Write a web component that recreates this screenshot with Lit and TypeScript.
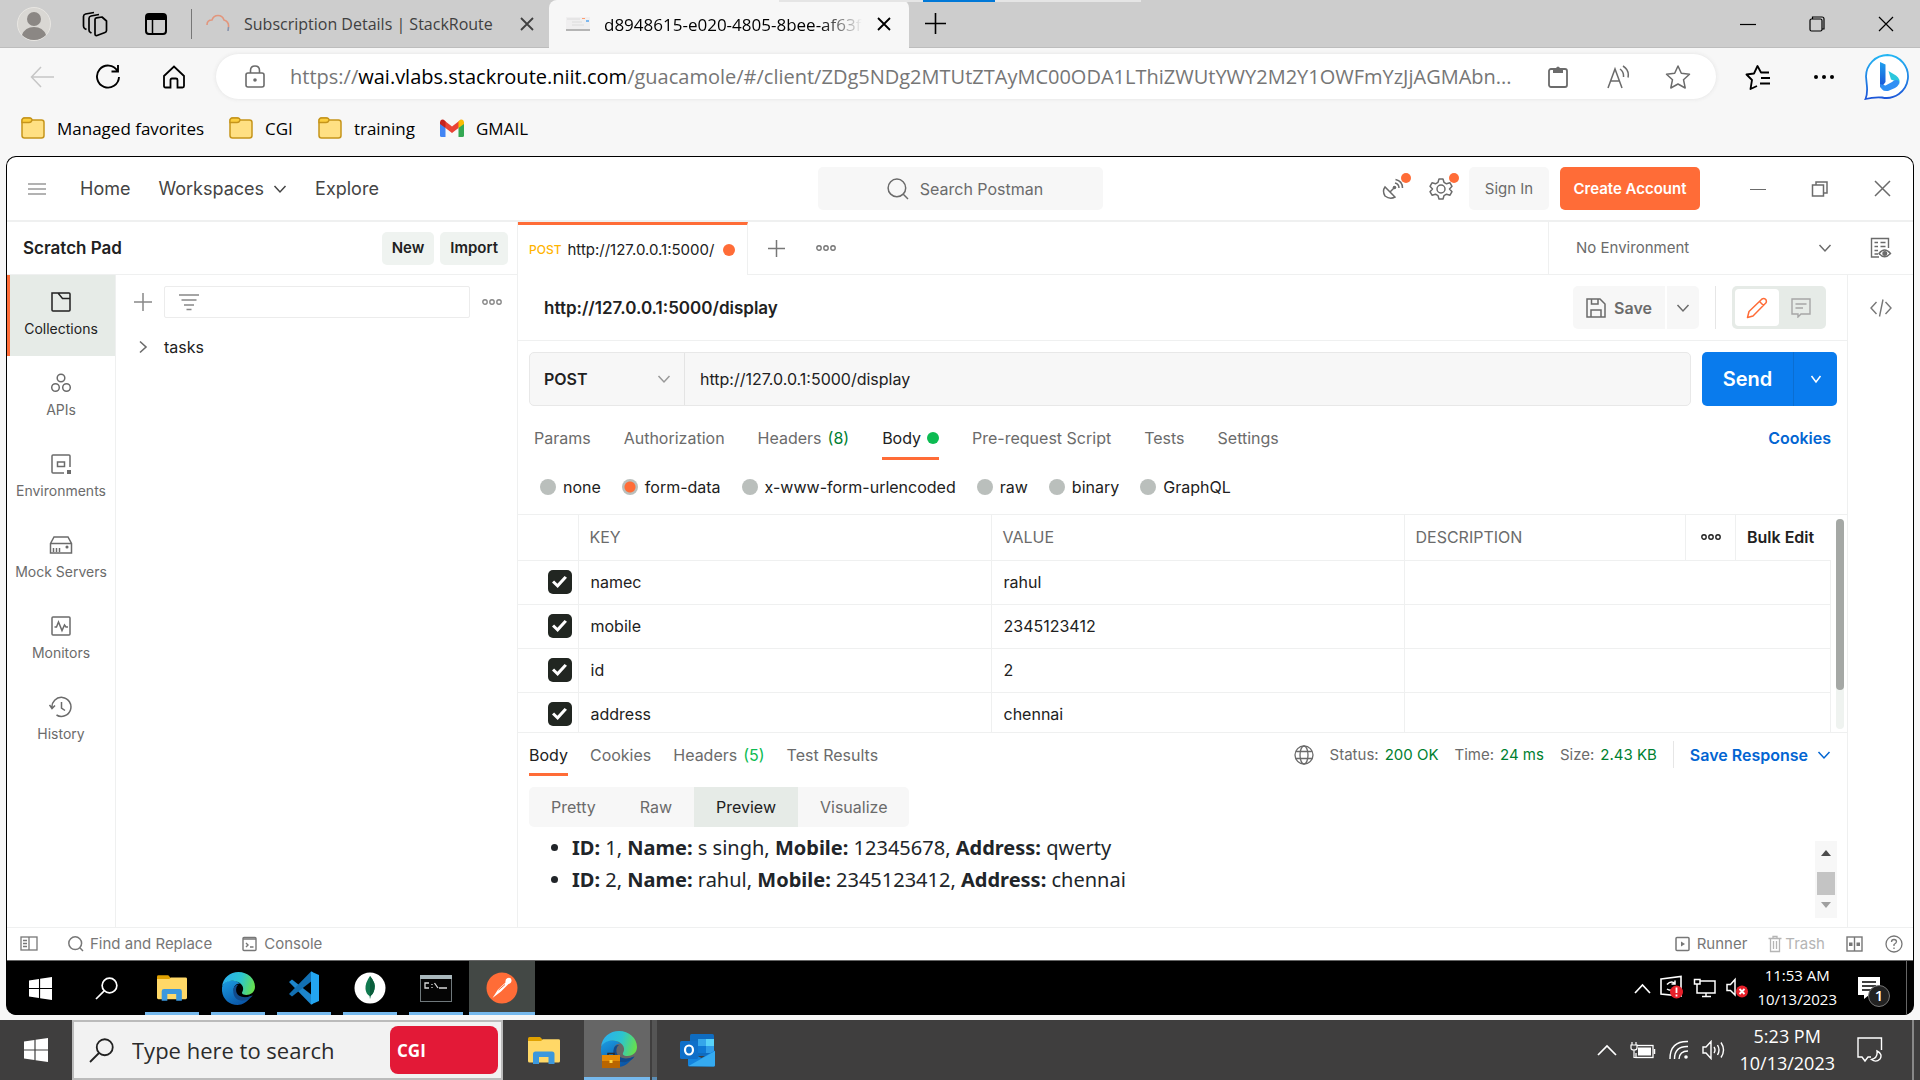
import { LitElement, html, svg, css, nothing } from "lit";
import { customElement } from "lit/decorators.js";
import { classMap } from "lit/directives/class-map.js";

/* ------------------------------------------------------------------ icons */

const line = (w: number, h: number, body: unknown, width = 1.5, cls = "") => html`<svg
  class=${cls} width=${w} height=${h} viewBox="0 0 ${w} ${h}" fill="none" stroke="currentColor"
  stroke-width=${width} aria-hidden="true">${body}</svg>`;

const art = (w: number, h: number, box: string, body: unknown) => html`<svg
  width=${w} height=${h} viewBox=${box} aria-hidden="true">${body}</svg>`;

const chevron = (w = 14, width = 1.5) =>
  line(w, 10, svg`<path d="M1.5 2 L${w / 2} 8 L${w - 1.5} 2"/>`, width);

const cross = (s: number, width = 1.5) =>
  line(s, s, svg`<path d="M1 1 L${s - 1} ${s - 1} M${s - 1} 1 L1 ${s - 1}"/>`, width);

const plus = (s: number, width = 1.5) =>
  line(s, s, svg`<path d="M${s / 2} 0 V${s} M0 ${s / 2} H${s}"/>`, width);

const dots = () =>
  line(20, 8, svg`<circle cx="3" cy="4" r="2.2"/><circle cx="10" cy="4" r="2.2"/><circle cx="17" cy="4" r="2.2"/>`, 1.4);

const magnifier = (s: number, width = 1.5) =>
  line(s, s, svg`<circle cx=${s * 0.45} cy=${s * 0.45} r=${s * 0.4}/><path d="M${s * 0.74} ${s * 0.74} L${s - 1} ${s - 1}"/>`, width);

const magnifierLeft = (s: number, width: number) =>
  line(s, s, svg`<circle cx=${s * 0.63} cy=${s * 0.37} r=${s * 0.32}/><path d="M${s * 0.4} ${s * 0.6} L1 ${s - 1}"/>`, width);

const windowsLogo = (s: number) => art(s, s, "0 0 24 24", svg`
  <path fill="#fff" d="M0 3.6 L10.4 2 V11.4 H0Z M11.6 1.8 L24 0 V11.4 H11.6Z M0 12.6 H10.4 V22 L0 20.4Z M11.6 12.6 H24 V24 L11.6 22.2Z"/>`);

const favFolder = () => art(24, 24, "0 0 24 24", svg`
  <path fill="#ffe083" stroke="#c6951b" stroke-width="1.5" d="M1 5 Q1 2 3.5 2 H8.5 Q10 2 11 4 H20.5 Q23 4 23 6.5 V19.5 Q23 22 20.5 22 H3.5 Q1 22 1 19.5Z"/>
  <path fill="#fccf3f" stroke="#c6951b" stroke-width="1.3" d="M1 4.5 Q1 2 3.5 2 H8 Q11 2 11 4 Q10.500 6.500 8 6.500 H1Z"/>`);

const explorer = (w: number, h: number) => art(w, h, "0 0 32 27", svg`
  <path fill="#e0a100" d="M0 1.500 Q0 0 1.500 0 H12 L15 3 V5 H0Z"/>
  <path fill="#ffd867" d="M0 4 H13 L15 2.200 H30.500 Q32 2.200 32 3.500 V24 Q32 25.500 30.500 25.500 H1.500 Q0 25.500 0 24Z"/>
  <path fill="#3c98dd" d="M5 27 V17 Q5 14.500 7.500 14.500 H24 Q26.500 14.500 26.500 17 V27 H20.500 V20 H11 V27Z"/>`);

const edge = (s: number, id: string) => art(s, s, "0 0 36 36", svg`
  <defs>
    <linearGradient id="${id}a" x1="0" y1="0.300" x2="1" y2="0.500">
      <stop offset="0" stop-color="#2aaef0"/><stop offset="0.550" stop-color="#2cc4cf"/><stop offset="1" stop-color="#66e04d"/>
    </linearGradient>
    <linearGradient id="${id}b" x1="0" y1="0" x2="0.600" y2="1">
      <stop offset="0" stop-color="#1b9de2"/><stop offset="1" stop-color="#0a56a8"/>
    </linearGradient>
  </defs>
  <path fill="url(#${id}b)" d="M0 17 C2 8 14 7 20 13 C15 12 12 16 13 21 C14 27 22 31 32 26 C28 33 22 36 17 36 C7 36 -1 28 0 17Z"/>
  <path fill="#114a8b" d="M13 17 C10 26 17 36 30 29 C33 27 34 25 33 25.500 C26 29 17 28 15.500 21 C15 18 16 15 18 14 C16 13.500 14 14.500 13 17Z"/>
  <path fill="url(#${id}a)" d="M0 16 C1 6 9 0 18 0 C28 0 36 7 36 16 C36 22 31 25 26.500 25 C22 25 21 23 22.500 21 C25 16 20 10 12 9.500 C6 9.500 2 12 0 16Z"/>`);

const icons = {
  avatar: art(34, 34, "0 0 34 34", svg`
    <circle cx="17" cy="17" r="16.500" fill="#d9d7d3" stroke="#e8e6e2"/>
    <circle cx="17" cy="12" r="7" fill="#8b8784"/><path d="M5 28 Q8 20 17 20 Q26 20 29 28 Q24 33 17 33 Q10 33 5 28Z" fill="#8b8784"/>`),
  workspaces: line(26, 26, svg`
    <path stroke-linejoin="round" d="M13 8.500 Q13 7 14.500 6.800 L20 6 L24.500 10 V19.500 Q24.500 21 23 21.500 L15 24.500 Q13 25 13 23Z"/>
    <path d="M9.500 22 L8.500 21.500 Q7 21 7 19 V7.500 Q7 5.500 9 5 L17 3.500"/>
    <path d="M4.500 18.500 L3 17.800 Q1.500 17 1.500 15 V5.500 Q1.500 3.500 3.500 3 L12 1.500"/>`, 1.7),
  tabActions: html`<svg width="22" height="22" viewBox="0 0 22 22" aria-hidden="true">
    <rect x="1" y="1" width="20" height="20" rx="3" fill="none" stroke="#000" stroke-width="2"/>
    <path d="M1 2 H21 V7 H1Z"/><path d="M7.500 7 V20" stroke="#000" stroke-width="1.500"/></svg>`,
  cloud: line(24, 20, svg`<path d="M1 11 C1 7 4 6 6 6 C8 0 16 0 18 6 C21 7 23 9 22.500 13" stroke="#e2967d"/><path d="M22.500 13 L22 17" stroke="#8a95ad"/>`, 1.6),
  pagePreview: art(24, 14, "0 0 24 14", svg`
    <rect width="24" height="14" fill="#f0eff0"/><path stroke="#dcdcdc" stroke-width="1" d="M1 2 H14 M6 5 H16 M6 8 H18"/>
    <rect x="16" y="1" width="3" height="1" fill="#ff9d70"/><rect x="20" y="3" width="3" height="2" fill="#7db7ee"/><rect y="12" width="24" height="2" fill="#b5b5b5"/>`),
  minimise: line(16, 16, svg`<path d="M0 8.500 H16"/>`, 1.2),
  restore: line(16, 16, svg`<rect x="1" y="3" width="12" height="12" rx="1.500"/><path d="M3.500 3 V1 H13 Q15 1 15 3 V13 H13"/>`, 1.2),
  back: line(24, 22, svg`<path d="M24 11 H1.500 M11 1 L1.500 11 L11 21"/>`, 1.5),
  reload: line(26, 26, svg`<path d="M22.500 7 A11 11 0 1 0 24 13 M23 1 V7.500 H16.500"/>`, 1.9),
  home: line(24, 24, svg`<path d="M2 11 L12 1.500 L22 11 V21 Q22 22.500 20.500 22.500 H15.500 V15 Q15.500 13.500 14 13.500 H10 Q8.500 13.500 8.500 15 V22.500 H3.500 Q2 22.500 2 21Z"/>`, 1.8),
  lock: line(20, 24, svg`<rect x="1" y="8" width="18" height="14" rx="2"/><path d="M5.500 8 V5.500 Q5.500 1 10 1 Q14.500 1 14.500 5.500 V8"/><circle cx="10" cy="15" r="1" fill="currentColor"/>`, 1.6),
  clipboard: line(20, 22, svg`<rect x="1" y="3" width="18" height="18" rx="2"/><path d="M5 3 H8 Q8 0.500 10 0.500 Q12 0.500 12 3 H15 V7 H5Z" fill="currentColor" stroke="none"/>`, 1.8),
  readAloud: line(24, 24, svg`<path d="M2 23 L9 4 L16 23 M5 16 H13 M14 4 Q18 7 17.500 12 M17 1 Q23.500 5 22 12.500"/>`, 1.5),
  star: line(26, 26, svg`<path stroke-linejoin="round" d="M13 2 L16.300 9.300 L24.500 10.200 L18.500 15.700 L20.200 24 L13 20 L5.800 24 L7.500 15.700 L1.500 10.200 L9.700 9.300Z"/>`, 1.5),
  favourites: line(26, 26, svg`<path stroke-linejoin="round" d="M12 22 L5.500 25 L7 16 L1.500 10.500 L9 9.500 L12.500 2 L16 8.500 H24"/><path d="M16 14 H25 M15 19.500 H25"/>`, 1.8),
  more: html`<svg width="22" height="6" viewBox="0 0 22 6" aria-hidden="true"><circle cx="3" cy="3" r="2"/><circle cx="11" cy="3" r="2"/><circle cx="19" cy="3" r="2"/></svg>`,
  bing: art(46, 46, "0 0 46 46", svg`
    <defs><linearGradient id="bg" x1="0" y1="0" x2="0" y2="1"><stop offset="0" stop-color="#24b6f3"/><stop offset="1" stop-color="#1d55d8"/></linearGradient>
    <linearGradient id="bb" x1="0" y1="0" x2="0" y2="1"><stop offset="0" stop-color="#1fa0ee"/><stop offset="1" stop-color="#1a4fd6"/></linearGradient></defs>
    <path fill="#fff" stroke="url(#bg)" stroke-width="1.800" d="M23.500 1 A21.500 21.500 0 1 1 18 43.500 Q9 43 1.500 45 Q3.500 40 3 33 L2 22.500 A21.500 21.500 0 0 1 23.500 1Z"/>
    <path fill="url(#bb)" d="M16 8 L21.500 10.500 V28 L17 34 Q16 33 16 31Z"/>
    <path fill="#2bc7dd" d="M24.500 17 L32 21.500 Q37 25 35 31 Q34.500 28 31 27 L27 25.500Z"/>
    <path fill="#2f8ff4" d="M16 30 Q16.500 38 24 37 L31 34 Q36 31 35 27 Q31.500 24.500 28 28 L21.500 31.500Z"/>`),
  gmail: art(24, 18, "0 0 24 18", svg`
    <path fill="#4285f4" d="M0 3 L5.500 7 V18 H1.500 Q0 18 0 16.500Z"/><path fill="#34a853" d="M24 3 L18.500 7 V18 H22.500 Q24 18 24 16.500Z"/>
    <path fill="#ea4335" d="M3 0.500 L12 7.500 L21 0.500 L18.500 9 L12 14 L5.500 9Z"/><path fill="#c5221f" d="M0 3 Q0.500 -0.500 3.500 0.700 L5.500 2.300 V9 L0 5Z"/><path fill="#fbbc04" d="M24 3 Q23.500 -0.500 20.500 0.700 L18.500 2.300 V9 L24 5Z"/>`),
  menu: line(18, 14, svg`<path d="M0 2 H18 M0 7 H18 M0 12 H18"/>`, 1.6),
  satellite: line(24, 24, svg`<path d="M4 10 Q1 14 4 19 Q9 23 14 20 Z M9 15 L13 11"/><circle cx="13.500" cy="10.500" r="1.800" fill="currentColor" stroke="none"/><path d="M14 6 Q18 7 18 11 M14.500 2.500 Q21.500 4 21.500 11"/>`, 1.5),
  gear: line(24, 24, svg`<path stroke-linejoin="round" d="M10 2 H14 L15 5.300 L17.500 6.800 L21 5.800 L23 9.300 L20.500 12 L23 14.700 L21 18.200 L17.500 17.200 L15 18.700 L14 22 H10 L9 18.700 L6.500 17.200 L3 18.200 L1 14.700 L3.500 12 L1 9.300 L3 5.800 L6.500 6.800 L9 5.300Z"/><circle cx="12" cy="12" r="4"/>`, 1.5),
  restoreRemote: line(18, 18, svg`<rect x="1.500" y="5" width="11" height="11"/><path d="M5 5 V2 H16 V13 H12.500"/>`, 1.5),
  envEye: line(22, 22, svg`<path d="M9 20 H1.500 V1.500 H18.500 V11 M4.500 5.500 H8 M10.500 5.500 H15.500 M4.500 9.500 H8 M10.500 9.500 H15.500 M4.500 13.500 H8 M4.500 17 H8"/><path d="M9 16.500 Q14.500 9.500 20.500 16.500 Q14.500 23 9 16.500Z"/><circle cx="14.800" cy="16.500" r="1.800" fill="currentColor"/>`, 1.4),
  collection: line(22, 22, svg`<path d="M2 2 H8 L12.500 7.500 H20 V19 Q20 20 19 20 H3 Q2 20 2 19Z M8 2 H19 Q20 2 20 3 V8"/>`, 1.5),
  apis: line(22, 22, svg`<circle cx="11" cy="6" r="3.800"/><circle cx="5.500" cy="15.500" r="3.800"/><circle cx="16.500" cy="15.500" r="3.800"/>`, 1.5),
  environment: line(22, 22, svg`<path d="M20 14 V3 Q20 2 19 2 H3 Q2 2 2 3 V19 Q2 20 3 20 H14"/><rect x="7.500" y="9" width="7" height="4.500"/><rect x="17" y="17" width="4" height="4" fill="currentColor" stroke="none"/>`, 1.5),
  server: line(24, 22, svg`<path d="M1.500 9.500 L5 3 H19 L22.500 9.500 V19 H1.500Z M1.500 9.500 H22.500 M4.500 18 V14 M7.500 18 V14 M10.500 18 V14"/><circle cx="18" cy="13" r="0.800" fill="currentColor"/>`, 1.5),
  monitor: line(22, 22, svg`<rect x="2" y="2" width="18" height="18" rx="1"/><path d="M4.500 12 H6.500 L8.500 7 L12 15.500 L14.500 10 L16 12 H18"/>`, 1.5),
  history: line(24, 22, svg`<path d="M3 12 A9.500 9.500 0 1 1 7.500 19 M0.500 9 L3 12.500 L6 9.500 M12.500 6 V12 L16 14.500"/>`, 1.5),
  filter: line(20, 18, svg`<path d="M0 2 H20 M2.500 7 H17.500 M5 12 H15 M7.500 16.500 H12.500"/>`, 1.6),
  right: line(10, 14, svg`<path d="M2 1.500 L8 7 L2 12.500"/>`, 1.6),
  save: line(20, 20, svg`<path d="M1 1 H14 L19 6 V19 H1Z M5.500 1 V6 H12 V1 M5 19 V12 H15 V19"/>`, 1.5),
  pencil: line(22, 22, svg`<path stroke-linejoin="round" d="M1.500 20.500 L3 14.500 L16 2 Q18 0.800 19.800 2.500 Q21 4.500 19.800 6 L7 19Z M13.500 4.500 L17.500 8.500"/>`, 1.5),
  comment: line(20, 20, svg`<path d="M1 1 H19 V16 H10 L7 19 V16 H1Z M4.500 6 H15.500 M4.500 10 H12"/>`, 1.4),
  code: line(22, 18, svg`<path d="M6.500 3 L1 9 L6.500 15 M15.500 3 L21 9 L15.500 15 M13 0.500 L9.500 17.500"/>`, 1.4),
  globe: line(20, 20, svg`<circle cx="10" cy="10" r="9"/><ellipse cx="10" cy="10" rx="4" ry="9"/><path d="M2 6.500 H18 M2 13.500 H18"/>`, 1.3),
  panel: line(18, 16, svg`<rect x="1" y="1" width="16" height="13"/><path d="M9 1 V14 M3 4.500 H7 M3 7.500 H7 M3 10.500 H7"/>`, 1.3),
  console: line(16, 16, svg`<rect x="1" y="1.500" width="13" height="13" rx="1"/><path d="M1 3 H14 M4 7 L6 9 L4 11 M8 11 H11.500"/>`, 1.4),
  runner: line(16, 16, svg`<rect x="1" y="1.500" width="13" height="13" rx="1"/><path d="M6 5.500 L10 8 L6 10.500Z" fill="currentColor" stroke="none"/>`, 1.5),
  trash: line(14, 18, svg`<path d="M0.500 3.500 H13.500 M5 3.500 V1.500 H9 V3.500 M2.500 3.500 V16.500 H11.500 V3.500 M5.500 6 V14 M8.500 6 V14"/>`, 1.3),
  twoPane: line(18, 18, svg`<rect x="1" y="2" width="15" height="14"/><path d="M8.500 2 V16"/><rect x="3" y="7.500" width="3.500" height="3.500" fill="currentColor" stroke="none"/><rect x="10.500" y="7.500" width="3.500" height="3.500" fill="currentColor" stroke="none"/>`, 1.4),
  help: line(18, 18, svg`<circle cx="9" cy="9" r="8"/><path d="M6.500 7 Q6.500 4.500 9 4.500 Q11.500 4.500 11.500 6.800 Q11.500 8 9 9.500 V11 M9 12.500 V14"/>`, 1.3),
  vscode: art(34, 34, "0 0 34 34", svg`
    <path fill="#1d86cc" d="M2 11 L5 8.500 L26 25 V33 L24 33.500Z"/><path fill="#1270b3" d="M2 23 L5 25.500 L26 9 V1 L24 0.500Z"/>
    <path fill="#23a5f0" d="M24 0.500 L32 4 V30 L24 33.500 Z"/>`),
  mongo: art(32, 32, "0 0 32 32", svg`
    <circle cx="16" cy="16" r="15.500" fill="#fff"/><path fill="#10794f" d="M16 4 Q22 11 20.500 17 Q19.500 22 16.500 24 L16 27 L15.500 24 Q12 22 11.500 17 Q11 11 16 4Z"/><path fill="#0a5c3b" d="M16 4 Q22 11 20.500 17 Q19.500 22 16.500 24 L16 27Z"/>`),
  terminal: html`<svg width="32" height="27" viewBox="0 0 32 27" aria-hidden="true">
    <rect x="0.500" y="0.500" width="31" height="26" fill="#050505" stroke="#6f787b"/><rect width="32" height="4" fill="#a9b7bc"/>
    <path d="M9 8 H5 V13 H9 M12 9 V10 M12 12 V13 M14.500 8 L18 13 M19 13 H27" fill="none" stroke="#d8d8d8" stroke-width="1.300"/></svg>`,
  postman: art(32, 32, "0 0 32 32", svg`
    <circle cx="16" cy="16" r="15.500" fill="#ff6c37"/><path fill="#fff" d="M6.500 26 L12 17.500 L19.500 10.500 Q19 7 21.500 6 Q25 5 25.500 8 Q25.800 11.500 22.500 12 L15 19.500Z"/><path stroke="#ff6c37" stroke-width="1" d="M12.500 18 L19 12.500"/>`),
  caret: line(20, 12, svg`<path d="M1 11 L10 2 L19 11"/>`, 1.7),
  update: art(26, 26, "0 0 26 26", svg`
    <path fill="none" stroke="#fff" stroke-width="1.600" d="M2 4 L22 1.500 V21 L2 19Z"/><path fill="none" stroke="#fff" stroke-width="1.500" d="M8 9.500 Q12 5 16 8.500 M16 5.500 V9 H12.500 M16 13 Q12 17 8 14"/>
    <circle cx="17.500" cy="17" r="6.500" fill="#e8202a"/><path stroke="#fff" stroke-width="1.800" d="M17.500 12.500 V18 M17.500 19.500 V21.500"/>`),
  network: line(24, 20, svg`<path d="M7 3 H22 V15 H4 V9 M1.500 1.500 H7 V6 H1.500Z M4 6 V9 M13 15 V18.500 M9 18.500 H18"/>`, 1.5),
  muted: art(24, 22, "0 0 24 22", svg`
    <path fill="none" stroke="#fff" stroke-width="1.500" d="M2 7.500 H5.500 L10 2.500 V18 L5.500 13.500 H2Z"/>
    <circle cx="17" cy="14.500" r="6" fill="#e8202a"/><path stroke="#fff" stroke-width="1.800" d="M14.500 12 L19.500 17 M19.500 12 L14.500 17"/>`),
  message: art(24, 24, "0 0 24 24", svg`
    <path fill="#fff" d="M1 1 H23 V19 H12 L7 23 V19 H1Z"/><path stroke="#000" stroke-width="1.600" d="M5 6 H19 M5 10 H19 M5 14 H14"/>`),
  briefcase: art(18, 16, "0 0 18 16", svg`
    <path fill="none" stroke="#2b2b2b" stroke-width="1.500" d="M6 4 V1.500 H12 V4"/><rect y="3" width="18" height="13" fill="#e48a05"/><rect y="9" width="18" height="7" fill="#b96500"/><rect x="7.500" y="8" width="3" height="3" fill="#ffd53d"/>`),
  outlook: html`<svg width="35" height="33" viewBox="0 0 35 33" aria-hidden="true">
    <rect x="10" y="0" width="24" height="22" rx="1.500" fill="#0f6cc0"/><rect x="18" y="5" width="8" height="7" fill="#35a6ea"/><rect x="26" y="5" width="8" height="7" fill="#58d2f8"/>
    <rect x="18" y="12" width="8" height="7" fill="#0f78d4"/><rect x="26" y="12" width="8" height="7" fill="#2f9ce8"/>
    <path fill="#1383dd" d="M8 17 L21.500 24 L35 16.500 V31 Q35 32.500 33.500 32.500 H9.500 Q8 32.500 8 31Z"/><path fill="#35aaf0" d="M35 17 L8.500 32 L34 32.500 Q35 32 35 31Z"/>
    <rect x="0" y="7" width="18" height="18" rx="1.500" fill="#0f6fc9"/><ellipse cx="9" cy="16" rx="4" ry="4.500" fill="none" stroke="#fff" stroke-width="2.200"/></svg>`,
  battery: html`<svg width="26" height="18" viewBox="0 0 26 18" aria-hidden="true">
    <rect x="6" y="4.500" width="17" height="12" fill="none" stroke="#fff" stroke-width="1.300"/><rect x="8" y="6.500" width="13" height="8" fill="#fff"/><path d="M24.500 8 V13" stroke="#fff" stroke-width="1.500"/>
    <rect x="0" y="1" width="7" height="11" fill="#3f3e3e"/><path d="M2 1 V4 M6 1 V4 M1 4 H7 V7 Q7 9 4 9 Q1 9 1 7Z M4 9 V16.500 H7" fill="none" stroke="#fff" stroke-width="1.200"/></svg>`,
  wifi: line(20, 20, svg`<path d="M1 19 Q1 1 19 1.500 M5.500 19 Q5.500 6 19 6.500 M10 19 Q10.500 11 19 11"/><circle cx="17" cy="17" r="1.800" fill="currentColor" stroke="none"/>`, 1.4),
  volume: line(24, 20, svg`<path d="M1 7 H4 L9 1.500 V18.500 L4 13 H1Z M12 7 Q14 10 12 13 M15.500 5 Q18.500 10 15.500 15 M19 2.500 Q24 10 19 17.500"/>`, 1.4),
  quiet: line(26, 26, svg`<path d="M14 20 H11 L8 24 L5 20 H1 V1 H24.500 V13"/><path d="M20 14 Q26 17 23 22 Q19 26 14.500 22.500 Q21 21 20 14Z"/>`, 1.4),
};

/* ----------------------------------------------------------- shared rules */

const base = css`
  *, *::before, *::after { box-sizing: border-box; }
  svg { display: block; flex: none; }
  button, select, input { font: inherit; color: inherit; margin: 0; border: 0; background: none; padding: 0; }
  button { display: flex; align-items: center; justify-content: center; white-space: nowrap; cursor: pointer; flex: none; }
  a { color: inherit; text-decoration: none; }
  select { appearance: none; }
  input { min-width: 0; }
`;

/* --------------------------------------------------------- browser chrome */

@customElement("browser-chrome")
export class BrowserChrome extends LitElement {
  static styles = [base, css`
    :host { display: block; background: #f7f7f7; color: #000; font-size: 17px; }
    .strip { display: flex; height: 48px; background: #cdcdcd; padding-left: 3px; position: relative; border-bottom: 1px solid #bdbdbd; }
    .cell { width: 61px; height: 48px; }
    .tab { display: flex; align-items: center; width: 360px; padding: 0 17px; gap: 14px; min-width: 0; }
    .tab.idle { color: #404040; padding: 0 14px 0 5px; width: 363px; font-size: 16px; }
    .tab.idle::before { content: ""; width: 1px; height: 30px; background: #777; }
    .tab.open { background: #f7f7f7; border-radius: 8px 8px 0 0; height: 48px; }
    .name { flex: 1; white-space: nowrap; }
    .tab.open .name { overflow: hidden; mask-image: linear-gradient(to right, #000 84%, transparent); }
    .close { width: 16px; height: 24px; }
    .add { width: 52px; }
    .share { position: absolute; left: 779px; top: 0; width: 362px; height: 2px; background: linear-gradient(to right, #e5e5e5 144px, #0078d7 144px, #0078d7 216px, #e5e5e5 216px); }
    .window { margin-left: auto; display: flex; }
    .window button { width: 69px; height: 48px; }
    .tools { display: flex; align-items: center; height: 57px; padding: 0 3px 0 9px; }
    .tool { width: 66px; height: 44px; }
    .tool.off { color: #c6c6c6; }
    .tool.small { width: 60px; }
    .address { flex: 1; min-width: 0; display: flex; align-items: center; height: 45px; margin: 0 9px; padding: 0 8px 0 29px;
      border-radius: 23px; background: #fff; box-shadow: 0 0 4px #e2e2e2; color: #6b6b6b; }
    .url { flex: 1; min-width: 0; margin: 0 8px 0 25px; overflow: hidden; white-space: nowrap; font-size: 20px; color: #767676; outline: 0; }
    .host { color: #000; }
    .favs { display: flex; align-items: center; gap: 25px; height: 48px; padding: 0 21px 2px; }
    .fav { display: flex; align-items: center; gap: 12px; }
  `];

  render() {
    const favs: [string, unknown][] = [
      ["Managed favorites", favFolder()], ["CGI", favFolder()], ["training", favFolder()], ["GMAIL", icons.gmail],
    ];
    return html`
      <div class="strip">
        <button class="cell" aria-label="Profile">${icons.avatar}</button>
        <button class="cell" aria-label="Workspaces">${icons.workspaces}</button>
        <button class="cell" aria-label="Tab actions">${icons.tabActions}</button>
        <div class="tab idle">
          ${icons.cloud}<span class="name">Subscription Details | StackRoute</span>
          <button class="close" aria-label="Close tab">${cross(14, 1.8)}</button>
        </div>
        <div class="tab open">
          ${icons.pagePreview}<span class="name">d8948615-e020-4805-8bee-af63f</span>
          <button class="close" aria-label="Close tab">${cross(14, 1.8)}</button>
        </div>
        <button class="add" aria-label="New tab">${plus(21, 1.6)}</button>
        <div class="share"></div>
        <div class="window">
          <button aria-label="Minimise">${icons.minimise}</button>
          <button aria-label="Restore">${icons.restore}</button>
          <button aria-label="Close">${cross(16, 1.2)}</button>
        </div>
      </div>
      <div class="tools">
        <button class="tool off" aria-label="Back">${icons.back}</button>
        <button class="tool" aria-label="Reload">${icons.reload}</button>
        <button class="tool" aria-label="Home">${icons.home}</button>
        <div class="address">
          ${icons.lock}
          <div class="url" role="textbox" aria-label="Address" contenteditable="true">https://<span class="host">wai.vlabs.stackroute.niit.com</span>/guacamole/#/client/ZDg5NDg2MTUtZTAyMC00ODA1LThiZWUtYWY2M2Y1OWFmYzJjAGMAbn...</div>
          <button class="tool small" aria-label="Clipboard">${icons.clipboard}</button>
          <button class="tool small" aria-label="Read aloud">${icons.readAloud}</button>
          <button class="tool small" aria-label="Add favorite">${icons.star}</button>
        </div>
        <button class="tool" aria-label="Favorites">${icons.favourites}</button>
        <button class="tool" aria-label="More">${icons.more}</button>
        <button class="tool small" aria-label="Bing">${icons.bing}</button>
      </div>
      <nav class="favs">
        ${favs.map(([name, icon]) => html`<a class="fav" href="#">${icon}<span>${name}</span></a>`)}
      </nav>`;
  }
}

/* --------------------------------------------------------- postman window */

const rail: [string, unknown][] = [
  ["Collections", icons.collection], ["APIs", icons.apis], ["Environments", icons.environment],
  ["Mock Servers", icons.server], ["Monitors", icons.monitor], ["History", icons.history],
];
const rows = [["namec", "rahul"], ["mobile", "2345123412"], ["id", "2"], ["address", "chennai"]];
const results = [
  { id: "1", name: "s singh", mobile: "12345678", address: "qwerty" },
  { id: "2", name: "rahul", mobile: "2345123412", address: "chennai" },
];

@customElement("postman-window")
export class PostmanWindow extends LitElement {
  static styles = [base, css`
    :host { --line: #eff0f0; --muted: #6b6b6b; --ink: #212121; --orange: #ff6c37;
      display: flex; flex-direction: column; flex: 1; min-height: 0; background: #fff; color: var(--ink);
      font-family: Inter, "Liberation Sans", sans-serif; font-size: 16px; line-height: 20px; }
    .strong { font-weight: 600; }
    .muted { color: var(--muted); }

    .top { display: grid; grid-template-columns: 1fr 285px 1fr; align-items: center; height: 65px; border-bottom: 2px solid var(--line); color: #444; }
    .menu { display: flex; align-items: center; font-size: 18px; gap: 28px; padding-left: 15px; }
    .menu .burger { width: 30px; color: #999; }
    .menu button { gap: 9px; }
    .search { height: 43px; border-radius: 5px; background: #f7f7f7; color: var(--muted); gap: 11px; padding-left: 10px; }
    .actions { display: flex; justify-content: flex-end; align-items: center; color: var(--muted); font-size: 15px; }
    .badge { width: 48px; height: 43px; position: relative; }
    .badge::after { content: ""; position: absolute; right: 6px; top: 6px; width: 10px; height: 10px; border-radius: 50%; background: var(--orange); }
    .sign { height: 43px; width: 80px; border-radius: 5px; background: #f7f7f7; margin: 0 11px 0 4px; }
    .create { height: 43px; width: 140px; border-radius: 5px; background: var(--orange); color: #fff; margin-right: 27px; font-weight: 600; }
    .win { width: 62px; height: 43px; }

    .bar { display: flex; height: 53px; }
    .pad { width: 511px; display: flex; align-items: center; gap: 6px; padding: 0 9px 0 16px; border-right: 1px solid var(--line); border-bottom: 1px solid var(--line); }
    .pad h1 { margin: 0 auto 0 0; font-size: 17px; font-weight: 600; }
    .soft { height: 33px; padding: 0 10px; border-radius: 5px; background: #eff3f0; font-size: 15px; font-weight: 600; }
    .rtab { width: 230px; display: flex; align-items: center; gap: 6px; padding: 0 12px 0 11px; border-top: 3px solid var(--orange); border-right: 1px solid var(--line); font-size: 15px; }
    .verb { color: #ffb400; font-size: 12px; font-weight: 500; }
    .clip { flex: 1; overflow: hidden; white-space: nowrap; }
    .dot { width: 12px; height: 12px; border-radius: 50%; background: var(--orange); flex: none; }
    .spare { flex: 1; display: flex; align-items: center; padding-left: 4px; border-bottom: 1px solid var(--line); color: #777; }
    .spare button { width: 49px; height: 48px; }
    .env { width: 365px; display: flex; align-items: center; border-left: 1px solid var(--line); border-bottom: 1px solid var(--line); padding: 0 21px 0 27px; color: var(--muted); font-size: 15px; }
    .env select { flex: 1; }
    .env .eye { margin-left: 38px; }

    .work { display: flex; flex: 1; min-height: 0; }
    .rail { width: 109px; border-right: 1px solid var(--line); }
    .rail button { width: 100%; height: 81px; flex-direction: column; gap: 6px; color: #6b6b6b; font-size: 14px; border-left: 3px solid transparent; padding: 0 3px 2px 0; }
    .rail .on { background: #e6ebe7; color: var(--ink); border-color: var(--orange); }
    .side { width: 402px; border-right: 1px solid var(--line); }
    .find { display: flex; align-items: center; padding: 11px 16px 0 18px; gap: 12px; color: #888; }
    .find label { flex: 1; display: flex; align-items: center; height: 32px; padding: 0 14px; gap: 8px; border: 1px solid #ececec; border-radius: 2px; }
    .find input { flex: 1; }
    .tree { display: flex; align-items: center; gap: 16px; padding: 19px 22px; }

    .main { flex: 1; min-width: 0; display: flex; flex-direction: column; }
    .title { display: flex; align-items: center; height: 66px; padding: 0 21px 0 26px; border-bottom: 1px solid var(--line); }
    .title h2 { margin: 0 auto 0 0; font-size: 17px; font-weight: 600; }
    .split { display: flex; gap: 2px; color: var(--muted); font-weight: 600; }
    .split button { height: 43px; background: #f7f7f7; width: 32px; border-radius: 0 5px 5px 0; }
    .split .save { width: 92px; gap: 8px; border-radius: 5px 0 0 5px; }
    .tick { width: 1px; height: 43px; background: #e6e6e6; margin: 0 16px; }
    .mode { display: flex; padding: 3px; height: 43px; border-radius: 5px; background: #e6ebe7; color: #a6a6a6; }
    .mode button { width: 44px; border-radius: 4px; }
    .mode .on { background: #fff; color: var(--orange); }

    .request { display: flex; gap: 11px; padding: 11px 10px 0 11px; }
    .field { flex: 1; display: flex; align-items: center; height: 54px; border: 1px solid #e8e8e8; border-radius: 5px; background: #f7f7f7; }
    .method { display: flex; align-items: center; width: 155px; height: 52px; padding: 0 13px 0 14px; border-right: 1px solid #e4e4e4; color: #999; }
    .method select { flex: 1; font-weight: 600; color: var(--ink); }
    .field input { flex: 1; height: 52px; padding: 0 15px; }
    .send { display: flex; color: #fff; }
    .send button { height: 54px; background: #097bed; width: 44px; border-left: 1px solid #0a6ed2; border-radius: 0 5px 5px 0; }
    .send .go { width: 91px; font-size: 20px; font-weight: 600; border: 0; border-radius: 5px 0 0 5px; }

    .tabs { display: flex; gap: 33px; height: 44px; margin-top: 10px; padding: 0 16px; color: var(--muted); }
    .tabs a { display: flex; align-items: center; gap: 6px; border-top: 3px solid transparent; border-bottom: 3px solid transparent; white-space: nowrap; }
    .tabs .on { color: var(--ink); border-bottom-color: var(--orange); }
    .tabs .link { margin-left: auto; }
    .link { color: #0265d2; font-weight: 600; }
    .green { color: #007f31; }
    .lime { color: #0cbb52; }
    .blip { width: 12px; height: 12px; border-radius: 50%; background: #0cbb52; }

    .kinds { display: flex; align-items: center; gap: 21px; height: 54px; padding: 0 22px; }
    .kinds label { display: flex; align-items: center; gap: 7px; white-space: nowrap; }
    .kinds input { appearance: none; width: 16px; height: 16px; border-radius: 50%; background: #babfbc; }
    .kinds input:checked { background: radial-gradient(circle, var(--orange) 5px, #babfbc 6px); }

    .sheet { display: flex; height: 218px; overflow: hidden; border-top: 1px solid var(--line); padding-right: 3px; }
    table { flex: 1; align-self: flex-start; border-collapse: collapse; table-layout: fixed; width: 100%; }
    th, td { height: 44px; padding: 0 12px; text-align: left; border: solid var(--line); border-width: 0 1px 1px 0; font-weight: 400; }
    th { height: 45px; padding: 0 11px; color: var(--muted); }
    th:first-child { width: 60px; }
    .wide { width: 413px; }
    .slim { width: 50px; }
    .bulk { width: 95px; color: var(--ink); }
    .bulk { border-right: 0; }
    .slim button { width: 100%; color: var(--ink); }
    td:first-child { padding: 0 6px 0 0; }
    td input { appearance: none; display: flex; align-items: center; justify-content: center; width: 24px; height: 24px; margin-left: auto; border-radius: 5px; background: #212621; }
    td input:checked::after { content: ""; width: 15px; height: 12px; background: #fff; clip-path: polygon(0 54%, 14% 38%, 36% 64%, 84% 0, 100% 14%, 38% 100%); }
    .track { width: 8px; margin: 4px 0 3px 5px; border-radius: 4px; background: #eff3f0; }
    .thumb { width: 8px; height: 171px; border-radius: 4px; background: #a5a8a5; }

    .reply { display: flex; border-top: 1px solid var(--line); height: 44px; padding: 0 16px 0 11px; align-items: center; }
    .reply .tabs { margin: 0 auto 0 0; padding: 0; gap: 22px; height: 43px; }
    .facts { display: flex; align-items: center; gap: 16px; font-size: 15px; color: var(--muted); white-space: nowrap; }
    .facts b { font-weight: 400; color: #007f31; margin-left: 6px; }
    .reply .tick { height: 27px; margin: 0 16px; }
    .reply .link { gap: 9px; }
    .views { display: flex; align-self: flex-start; margin: 11px 0 0 11px; height: 40px; border-radius: 5px; overflow: hidden; background: #f7f7f7; color: var(--muted); }
    .views button { padding: 0 22px; }
    .views .on { background: #e6ebe7; color: var(--ink); }
    .preview { flex: 1; display: flex; min-height: 0; padding-right: 10px; color: #212529; font-family: "Noto Sans", "Open Sans", sans-serif; font-size: 20px; line-height: 32px; }
    .preview ul { flex: 1; margin: 0; padding: 5px 0 0 54px; }
    .scroll { display: flex; flex-direction: column; align-items: center; justify-content: space-between; width: 22px; margin: 14px 0 9px; padding: 9px 0 10px; background: #f7f7f7; }
    .up, .down { width: 10px; height: 6px; background: #4c4c4c; clip-path: polygon(50% 0, 100% 100%, 0 100%); }
    .down { background: #a0a0a0; clip-path: polygon(0 0, 100% 0, 50% 100%); }
    .grip { width: 18px; height: 23px; background: #c4c4c4; margin-top: 8px; }
    .aside { width: 66px; border-left: 1px solid var(--line); color: #777; }
    .aside button { width: 100%; height: 66px; }

    .status { display: flex; align-items: center; justify-content: space-between; height: 33px; border-top: 1px solid var(--line); padding: 0 10px 0 13px; color: #777; font-size: 15px; }
    .group { display: flex; align-items: center; gap: 30px; }
    .group.end { gap: 21px; }
    .status button { gap: 6px; }
    .status .trash { color: #b5b5b5; gap: 3px; }
  `];

  render() {
    return html`
      <header class="top">
        <nav class="menu">
          <button class="burger" aria-label="Menu">${icons.menu}</button>
          <button>Home</button><button>Workspaces ${chevron()}</button><button>Explore</button>
        </nav>
        <button class="search">${magnifier(22)} Search Postman</button>
        <div class="actions">
          <button class="badge" aria-label="Connection">${icons.satellite}</button>
          <button class="badge" aria-label="Settings">${icons.gear}</button>
          <button class="sign">Sign In</button>
          <button class="create">Create Account</button>
          <button class="win" aria-label="Minimise">${icons.minimise}</button>
          <button class="win" aria-label="Restore">${icons.restoreRemote}</button>
          <button class="win" aria-label="Close">${cross(17, 1.5)}</button>
        </div>
      </header>

      <div class="bar">
        <div class="pad"><h1>Scratch Pad</h1><button class="soft">New</button><button class="soft">Import</button></div>
        <div class="rtab"><span class="verb">POST</span><span class="clip">http://127.0.0.1:5000/</span><span class="dot"></span></div>
        <div class="spare"><button aria-label="New request">${plus(17)}</button><button aria-label="Tab options">${dots()}</button></div>
        <div class="env">
          <select aria-label="Environment"><option>No Environment</option></select>${chevron()}
          <button class="eye" aria-label="Environment quick look">${icons.envEye}</button>
        </div>
      </div>

      <div class="work">
        <nav class="rail">
          ${rail.map(([name, icon], i) => html`<button class=${classMap({ on: i === 0 })}>${icon}<span>${name}</span></button>`)}
        </nav>
        <div class="side">
          <div class="find">
            <button aria-label="Create collection">${plus(18)}</button>
            <label>${icons.filter}<input type="text" aria-label="Filter collections" /></label>
            <button aria-label="More actions">${dots()}</button>
          </div>
          <a class="tree" href="#"><span class="muted">${icons.right}</span>tasks</a>
        </div>

        <main class="main">
          <div class="title">
            <h2>http://127.0.0.1:5000/display</h2>
            <div class="split"><button class="save">${icons.save} Save</button><button aria-label="Save options">${chevron()}</button></div>
            <div class="tick"></div>
            <div class="mode"><button class="on" aria-label="Edit">${icons.pencil}</button><button aria-label="Comments">${icons.comment}</button></div>
          </div>
          <div class="request">
            <div class="field">
              <div class="method"><select aria-label="Method"><option>POST</option></select>${chevron()}</div>
              <input type="text" aria-label="Request URL" .value=${"http://127.0.0.1:5000/display"} />
            </div>
            <div class="send"><button class="go">Send</button><button aria-label="Send options">${chevron(12)}</button></div>
          </div>
          <nav class="tabs">
            <a href="#">Params</a><a href="#">Authorization</a>
            <a href="#">Headers <span class="green">(8)</span></a>
            <a href="#" class="on">Body <span class="blip"></span></a>
            <a href="#">Pre-request Script</a><a href="#">Tests</a><a href="#">Settings</a>
            <a href="#" class="link">Cookies</a>
          </nav>
          <div class="kinds">
            ${["none", "form-data", "x-www-form-urlencoded", "raw", "binary", "GraphQL"].map((k) => html`
              <label><input type="radio" name="kind" ?checked=${k === "form-data"} />${k}</label>`)}
          </div>
          <div class="sheet">
            <table>
              <thead><tr>
                <th></th><th class="wide">KEY</th><th class="wide">VALUE</th><th>DESCRIPTION</th>
                <th class="slim"><button aria-label="Columns">${dots()}</button></th>
                <th class="bulk"><button class="strong">Bulk Edit</button></th>
              </tr></thead>
              <tbody>
                ${rows.map(([key, value]) => html`<tr>
                  <td><input type="checkbox" checked aria-label="Use ${key}" /></td>
                  <td>${key}</td><td>${value}</td><td colspan="3">${nothing}</td></tr>`)}
              </tbody>
            </table>
            <div class="track"><div class="thumb"></div></div>
          </div>
          <div class="reply">
            <nav class="tabs">
              <a href="#" class="on">Body</a><a href="#">Cookies</a>
              <a href="#">Headers <span class="lime">(5)</span></a><a href="#">Test Results</a>
            </nav>
            <div class="facts">
              ${icons.globe}<span>Status:<b>200 OK</b></span><span>Time:<b>24 ms</b></span><span>Size:<b>2.43 KB</b></span>
            </div>
            <div class="tick"></div>
            <button class="link">Save Response ${chevron()}</button>
          </div>
          <div class="views">
            ${["Pretty", "Raw", "Preview", "Visualize"].map((v) => html`<button class=${classMap({ on: v === "Preview" })}>${v}</button>`)}
          </div>
          <div class="preview">
            <ul>
              ${results.map((r) => html`<li><b>ID:</b> ${r.id}, <b>Name:</b> ${r.name}, <b>Mobile:</b> ${r.mobile}, <b>Address:</b> ${r.address}</li>`)}
            </ul>
            <div class="scroll"><div class="up"></div><div class="grip"></div><div class="down"></div></div>
          </div>
        </main>
        <aside class="aside"><button aria-label="Code">${icons.code}</button></aside>
      </div>

      <footer class="status">
        <div class="group">
          <button aria-label="Toggle sidebar">${icons.panel}</button>
          <button>${magnifier(16)} Find and Replace</button>
          <button>${icons.console} Console</button>
        </div>
        <div class="group end">
          <button>${icons.runner} Runner</button>
          <button class="trash">${icons.trash} Trash</button>
          <button aria-label="Two-pane view">${icons.twoPane}</button>
          <button aria-label="Help">${icons.help}</button>
        </div>
      </footer>`;
  }
}

/* --------------------------------------------------------------- taskbars */

@customElement("remote-taskbar")
export class RemoteTaskbar extends LitElement {
  static styles = [base, css`
    :host { display: flex; height: 54px; background: #000; color: #fff; border-top: 1px solid #666; font-size: 15px; line-height: 24px; }
    .app { width: 66px; position: relative; }
    .app.run::after { content: ""; position: absolute; left: 6px; right: 6px; bottom: 0; height: 3px; background: #76b9ed; }
    .app.front { background: #434845; }
    .app.front::after { left: 0; right: 0; }
    .tray { margin-left: auto; display: flex; align-items: center; gap: 8px; }
    .clock { text-align: center; white-space: nowrap; margin-right: 12px; padding-bottom: 2px; }
    .note { position: relative; width: 60px; height: 52px; justify-content: flex-start; }
    .count { position: absolute; left: 11px; top: 23px; width: 22px; height: 22px; border-radius: 50%; border: 1px solid #777; background: #222; line-height: 19px; font-weight: 600; }
    .desk { width: 7px; height: 100%; border-left: 1px solid #666; margin-left: -19px; }
  `];

  render() {
    const apps: [string, unknown][] = [
      ["File Explorer", explorer(30, 26)], ["Microsoft Edge", edge(33, "r")], ["Visual Studio Code", icons.vscode],
      ["MongoDB Compass", icons.mongo], ["Command Prompt", icons.terminal], ["Postman", icons.postman],
    ];
    return html`
      <button class="app" aria-label="Start">${windowsLogo(23)}</button>
      <button class="app" aria-label="Search">${magnifierLeft(23, 1.7)}</button>
      ${apps.map(([name, icon]) => html`<button class=${classMap({ app: true, run: true, front: name === "Postman" })} aria-label=${name}>${icon}</button>`)}
      <div class="tray">
        <button aria-label="Hidden icons">${line(17, 11, svg`<path d="M1 10 L8.500 2 L16 10"/>`, 1.7)}</button>
        ${icons.update}${icons.network}${icons.muted}
        <div class="clock">11:53 AM<br />10/13/2023</div>
        <button class="note" aria-label="Notifications">${icons.message}<span class="count">1</span></button>
        <div class="desk"></div>
      </div>`;
  }
}

@customElement("host-taskbar")
export class HostTaskbar extends LitElement {
  static styles = [base, css`
    :host { display: flex; height: 60px; background: #3f3e3e; color: #fff; font-size: 18px; line-height: 27px; }
    .start { width: 72px; }
    .search { display: flex; align-items: center; width: 431px; padding: 0 3px 0 15px; border: 2px solid #bbb; background: #f2f2f2; color: #222; }
    .search input { flex: 1; padding: 0 18px; font-size: 22px; outline: 0; }
    .search input::placeholder { color: #2b2b2b; opacity: 1; }
    .brand { display: flex; align-items: center; width: 108px; height: 48px; padding-left: 7px; border-radius: 8px; background: #e31937; color: #fff; font-size: 17px; font-weight: 700; }
    .app { width: 81px; position: relative; }
    .app.front { width: 66px; padding-left: 4px; background: #666; border-bottom: 3px solid #76b9ed; }
    .more { width: 5px; margin-left: 2px; background: #555; border-bottom: 3px solid #5b8db4; }
    .case { position: absolute; left: 18px; bottom: 9px; }
    .tray { margin-left: auto; display: flex; align-items: center; gap: 13px; }
    .clock { text-align: center; white-space: nowrap; margin-right: 9px; }
    .desk { width: 8px; height: 100%; border-left: 2px solid #888; margin-left: 16px; }
  `];

  render() {
    return html`
      <button class="start" aria-label="Start">${windowsLogo(24)}</button>
      <label class="search">${magnifierLeft(25, 1.8)}
        <input type="text" placeholder="Type here to search" aria-label="Search" /><span class="brand">CGI</span></label>
      <button class="app" aria-label="File Explorer">${explorer(32, 27)}</button>
      <button class="app front" aria-label="Microsoft Edge">${edge(36, "h")}<span class="case">${icons.briefcase}</span></button>
      <div class="more"></div>
      <button class="app" aria-label="Outlook">${icons.outlook}</button>
      <div class="tray">
        <button aria-label="Hidden icons">${icons.caret}</button>
        ${icons.battery}${icons.wifi}${icons.volume}
        <div class="clock">5:23 PM<br />10/13/2023</div>
        <button aria-label="Notifications">${icons.quiet}</button>
        <div class="desk"></div>
      </div>`;
  }
}

/* ------------------------------------------------------------------- page */

@customElement("app-root")
export class AppRoot extends LitElement {
  static styles = css`
    :host { display: flex; flex-direction: column; min-height: 100vh; background: #f7f7f7; font-family: "Open Sans", "Noto Sans", sans-serif; }
    .frame { flex: 1; display: flex; flex-direction: column; margin: 3px 6px 5px; border: 1px solid #000; border-bottom: 0; border-radius: 10px; overflow: hidden; background: #000; }
  `;

  render() {
    return html`
      <browser-chrome></browser-chrome>
      <div class="frame"><postman-window></postman-window><remote-taskbar></remote-taskbar></div>
      <host-taskbar></host-taskbar>`;
  }
}
